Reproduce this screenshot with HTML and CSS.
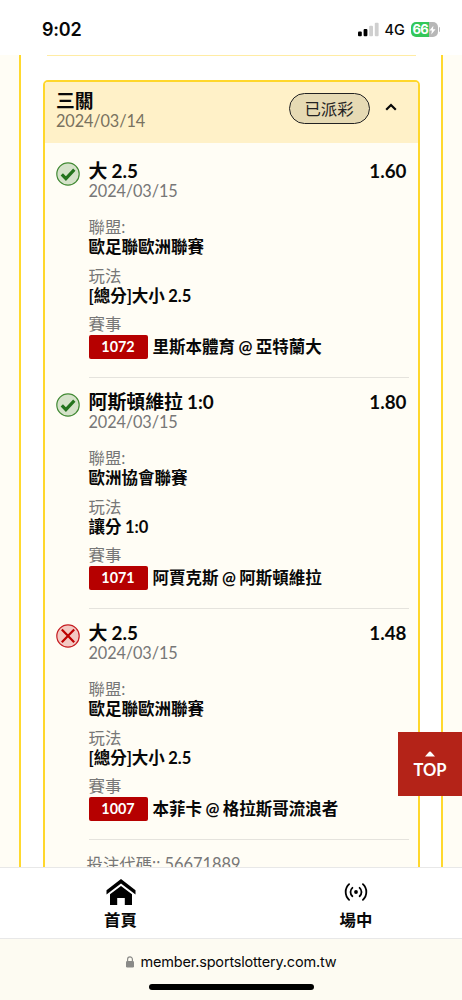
FILE: index.html
```html
<!DOCTYPE html>
<html lang="zh-Hant">
<head>
<meta charset="utf-8">
<title>台灣運彩</title>
<link rel="stylesheet" href="styles.css">
</head>
<body>
<div class="phone">
  <header class="status">
    <span class="clock">9:02</span>
    <svg class="signal" width="21" height="15" viewBox="0 0 21 15"><rect x="0" y="9.5" width="3.8" height="4.8" rx="1"/><rect x="5.6" y="7" width="3.8" height="7.3" rx="1"/><rect class="off" x="11.2" y="3.8" width="3.8" height="10.5" rx="1"/><rect class="off" x="16.8" y="0.8" width="3.8" height="13.5" rx="1"/></svg>
    <span class="network">4G</span>
    <span class="battery">66<svg width="8" height="10" viewBox="0 0 8 10"><path d="M5 0 .5 5.7h2.8L2.6 10l4.9-6H4.6z"/></svg></span>
    <i class="battery-tip"></i>
  </header>

  <main class="page">
    <div class="panel">
      <div class="previous"></div>
      <section class="card">
        <div class="card-head">
          <div class="heading"><h1>三關</h1><p class="date">2024/03/14</p></div>
          <span class="pill">已派彩</span>
          <svg class="chevron" width="12" height="8" viewBox="0 0 12 8"><path d="M1.2 6.8 6 2l4.8 4.8"/></svg>
        </div>
        <div class="bets">
          <article class="bet">
            <svg class="mark win" width="24" height="24" viewBox="0 0 24 24"><circle cx="12" cy="12" r="11.2"/><path d="m5.8 12.4 4.1 4.2 8.4-9"/></svg>
            <div class="bet-body">
              <div class="bet-title"><h2>大 2.5</h2><b>1.60</b></div>
              <p class="date">2024/03/15</p>
              <dl>
                <div><dt>聯盟:</dt><dd>歐足聯歐洲聯賽</dd></div>
                <div><dt>玩法</dt><dd>[總分]大小 2.5</dd></div>
                <div><dt>賽事</dt><dd class="match"><span class="code">1072</span>里斯本體育 @ 亞特蘭大</dd></div>
              </dl>
            </div>
          </article>
          <article class="bet">
            <svg class="mark win" width="24" height="24" viewBox="0 0 24 24"><circle cx="12" cy="12" r="11.2"/><path d="m5.8 12.4 4.1 4.2 8.4-9"/></svg>
            <div class="bet-body">
              <div class="bet-title"><h2>阿斯頓維拉 1:0</h2><b>1.80</b></div>
              <p class="date">2024/03/15</p>
              <dl>
                <div><dt>聯盟:</dt><dd>歐洲協會聯賽</dd></div>
                <div><dt>玩法</dt><dd>讓分 1:0</dd></div>
                <div><dt>賽事</dt><dd class="match"><span class="code">1071</span>阿賈克斯 @ 阿斯頓維拉</dd></div>
              </dl>
            </div>
          </article>
          <article class="bet">
            <svg class="mark lose" width="24" height="24" viewBox="0 0 24 24"><circle cx="12" cy="12" r="11.2"/><path d="m5.8 5.4 12.4 12.8M18.2 5.4 5.8 18.2"/></svg>
            <div class="bet-body">
              <div class="bet-title"><h2>大 2.5</h2><b>1.48</b></div>
              <p class="date">2024/03/15</p>
              <dl>
                <div><dt>聯盟:</dt><dd>歐足聯歐洲聯賽</dd></div>
                <div><dt>玩法</dt><dd>[總分]大小 2.5</dd></div>
                <div><dt>賽事</dt><dd class="match"><span class="code">1007</span>本菲卡 @ 格拉斯哥流浪者</dd></div>
              </dl>
            </div>
          </article>
          <p class="ticket">投注代碼:: 56671889</p>
        </div>
      </section>
    </div>
    <a class="top"><svg width="10" height="6" viewBox="0 0 10 6"><path d="M0 5.5 4.2.8q.8-.7 1.6 0L10 5.5z"/></svg>TOP</a>
  </main>

  <nav class="tabs">
    <a class="tab tab-home">
      <svg width="30" height="27" viewBox="0 0 30 27"><path d="M15 0 0.5 11.2v4.3L15 4.5l14.500 11v-4.300z"/><path d="M15 7 4 15.300V26h7.200v-7h7.600v7H26V15.300z"/></svg>
      <span>首頁</span>
    </a>
    <a class="tab tab-live">
      <svg width="24" height="20" viewBox="0 0 24 20"><circle cx="12" cy="10" r="1.900"/><path d="M8.400 5.800a5.600 5.600 0 0 0 0 8.400M15.600 5.800a5.600 5.600 0 0 1 0 8.400M5.100 2.200a10.600 10.600 0 0 0 0 15.600M18.900 2.200a10.600 10.600 0 0 1 0 15.600"/></svg>
      <span>場中</span>
    </a>
  </nav>
  <footer class="browser">
    <div class="address"><svg width="8" height="12" viewBox="0 0 8 12"><rect x="0" y="5" width="8" height="6.500" rx="1.200"/><path d="M1.600 5.500V3.300a2.400 2.400 0 0 1 4.800 0v2.200"/></svg>member.sportslottery.com.tw</div>
    <i class="home-bar"></i>
  </footer>
</div>
</body>
</html>
```
FILE: styles.css
```css
* { box-sizing: border-box; }
body { margin: 0; background: #fff; color: #080808; font-family: Lato, "Noto Sans CJK TC", sans-serif; font-size: 16.4px; }
h1, h2, p, dl, dd { margin: 0; }
svg { display: block; flex: none; }
.phone { width: 462px; height: 1000px; display: flex; flex-direction: column; overflow: hidden; }

.status { height: 55px; flex: none; display: flex; align-items: center; padding: 4px 22px 0 42px; font-family: Inter, sans-serif; }
.clock { flex: 1; font-size: 18px; font-weight: 600; letter-spacing: -0.2px; }
.signal .off { fill: #cfcfcf; }
.network { margin-left: 6px; font-size: 14.5px; font-weight: 500; width: 20px; }
.battery { display: flex; align-items: center; gap: 1px; margin-left: 6px; padding-left: 2px; width: 27px; height: 15px; border-radius: 5px; background: linear-gradient(90deg, #34c759 66%, #b7b7b7 66%); color: #fff; font-size: 13px; font-weight: 700; line-height: 15px; letter-spacing: -0.6px; }
.battery svg { fill: #fff; width: 7px; }
.battery-tip { width: 1.500px; height: 5px; margin-left: 1px; border-radius: 0 2px 2px 0; background: #bbb; }

.page { position: relative; height: 812px; flex: none; padding: 0 19px; background: #fffdf5; overflow: hidden; }
.panel { height: 812px; padding: 0 21.500px; border: solid #ffd92e; border-width: 0 2px; background: #fff; overflow: hidden; }
.previous { height: 1px; margin: 0 4px 24px; background: #ffeca4; }
.card { height: 900px; border: 2px solid #ffd72c; border-radius: 5px; background: #fffdf5; overflow: hidden; }
.card-head { height: 61px; display: flex; align-items: flex-start; padding: 9px 21px 0 11.500px; background: #fff1c8; }
.heading { flex: 1; }
h1 { font-size: 18.800px; line-height: 20px; font-weight: 700; }
.date { color: #777; font-size: 16.300px; letter-spacing: -0.12px; line-height: 20px; }
.card-head .date { color: #79725f; }
.pill { width: 81px; height: 31px; margin-top: 2px; border: 1.500px solid #222; border-radius: 16px; background: #e6dab4; color: #222; line-height: 29px; text-align: center; }
.chevron { margin: 12px 0 0 15px; fill: none; stroke: #080808; stroke-width: 2.200; }

.bets { padding: 4px 9px 0 11px; }
.bet { height: 231px; display: flex; gap: 9px; }
.mark { margin-top: 15px; stroke-width: 1.200; }
.win circle { fill: #d5e2c9; stroke: #438a35; }
.win path { fill: none; stroke: #24731d; stroke-width: 3.200; }
.lose circle { fill: #f3c9c3; stroke: #c61d23; }
.lose path { fill: none; stroke: #bd0000; stroke-width: 2.200; }
.bet-body { flex: 1; padding-top: 14px; border-bottom: 1px solid #e5e3dd; }
.bet-title { display: flex; justify-content: space-between; padding-right: 2px; font-size: 18.800px; line-height: 20px; }
.bet-title b { font-weight: 700; }
h2 { font-size: 18.900px; line-height: 20px; font-weight: 700; word-spacing: -0.5px; }
dl { display: flex; flex-direction: column; gap: 8.500px; padding-top: 16px; line-height: 20px; }
dt { color: #777; }
dd { font-weight: 700; height: 20px; font-size: 16.500px; word-spacing: -0.6px; white-space: nowrap; }
.match { display: flex; align-items: center; gap: 5px; height: 25px; }
.code { width: 59px; height: 24px; border-radius: 2px; background: #b60000; color: #fff; font-size: 14.400px; line-height: 23px; text-align: center; }
.ticket { padding: 14px 0 0 31px; color: #777; line-height: 20px; }
.top { position: absolute; right: 0; top: 677px; width: 64px; height: 64px; display: flex; flex-direction: column; align-items: center; gap: 3px; padding-top: 19px; background: #b42318; color: #fff; font-size: 16.500px; line-height: 20px; font-weight: 700; }
.top svg { fill: #fff; }

.tabs { height: 72px; flex: none; display: grid; grid-template-columns: 241px 1fr; border: solid #e8e8e8; border-width: 1px 0; background: #fff; }
.tab { display: flex; flex-direction: column; align-items: center; font-weight: 700; line-height: 20px; }
.tab-home { padding-top: 11px; gap: 4px; }
.tab-live { padding: 14px 0 0 9px; gap: 8px; }
.tab-live path { fill: none; stroke: #000; stroke-width: 1.800; stroke-linecap: round; }
.browser { flex: 1; display: flex; flex-direction: column; align-items: center; padding-top: 13px; background: #fdfbf2; font-family: Inter, sans-serif; }
.address { display: flex; align-items: center; gap: 7px; font-size: 14.500px; letter-spacing: -0.18px; line-height: 20px; }
.address svg { fill: #8a8a88; }
.address path { fill: none; stroke: #8a8a88; stroke-width: 1.200; }
.home-bar { width: 165px; height: 6px; margin-top: 12px; border-radius: 3px; background: #000; }
```
